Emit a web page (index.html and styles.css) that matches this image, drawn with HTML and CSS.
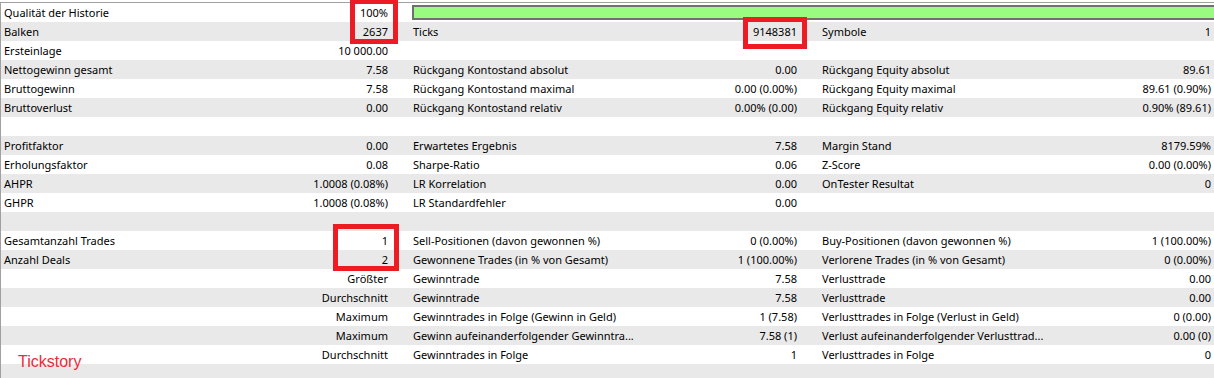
FILE: index.html
```html
<!DOCTYPE html>
<html lang="de">
<head>
<meta charset="utf-8">
<title>Tester Bericht</title>
<link rel="stylesheet" href="styles.css">
</head>
<body>
<div class="report">
  <div class="row">
    <div class="cell g1"><span>Qualität der Historie</span><span>100%</span></div>
    <div class="barcell"><div class="bar"></div></div>
  </div>
  <div class="row">
    <div class="cell g1"><span>Balken</span><span>2637</span></div>
    <div class="cell g2"><span>Ticks</span><span>9148381</span></div>
    <div class="cell g3"><span>Symbole</span><span>1</span></div>
  </div>
  <div class="row">
    <div class="cell g1"><span>Ersteinlage</span><span>10 000.00</span></div>
    <div class="cell g2"></div>
    <div class="cell g3"></div>
  </div>
  <div class="row">
    <div class="cell g1"><span>Nettogewinn gesamt</span><span>7.58</span></div>
    <div class="cell g2"><span>Rückgang Kontostand absolut</span><span>0.00</span></div>
    <div class="cell g3"><span>Rückgang Equity absolut</span><span>89.61</span></div>
  </div>
  <div class="row">
    <div class="cell g1"><span>Bruttogewinn</span><span>7.58</span></div>
    <div class="cell g2"><span>Rückgang Kontostand maximal</span><span>0.00 (0.00%)</span></div>
    <div class="cell g3"><span>Rückgang Equity maximal</span><span>89.61 (0.90%)</span></div>
  </div>
  <div class="row">
    <div class="cell g1"><span>Bruttoverlust</span><span>0.00</span></div>
    <div class="cell g2"><span>Rückgang Kontostand relativ</span><span>0.00% (0.00)</span></div>
    <div class="cell g3"><span>Rückgang Equity relativ</span><span>0.90% (89.61)</span></div>
  </div>
  <div class="row">
    <div class="cell g1"></div><div class="cell g2"></div><div class="cell g3"></div>
  </div>
  <div class="row">
    <div class="cell g1"><span>Profitfaktor</span><span>0.00</span></div>
    <div class="cell g2"><span>Erwartetes Ergebnis</span><span>7.58</span></div>
    <div class="cell g3"><span>Margin Stand</span><span>8179.59%</span></div>
  </div>
  <div class="row">
    <div class="cell g1"><span>Erholungsfaktor</span><span>0.08</span></div>
    <div class="cell g2"><span>Sharpe-Ratio</span><span>0.06</span></div>
    <div class="cell g3"><span>Z-Score</span><span>0.00 (0.00%)</span></div>
  </div>
  <div class="row">
    <div class="cell g1"><span>AHPR</span><span>1.0008 (0.08%)</span></div>
    <div class="cell g2"><span>LR Korrelation</span><span>0.00</span></div>
    <div class="cell g3"><span>OnTester Resultat</span><span>0</span></div>
  </div>
  <div class="row">
    <div class="cell g1"><span>GHPR</span><span>1.0008 (0.08%)</span></div>
    <div class="cell g2"><span>LR Standardfehler</span><span>0.00</span></div>
    <div class="cell g3"></div>
  </div>
  <div class="row">
    <div class="cell g1"></div><div class="cell g2"></div><div class="cell g3"></div>
  </div>
  <div class="row">
    <div class="cell g1"><span>Gesamtanzahl Trades</span><span>1</span></div>
    <div class="cell g2"><span>Sell-Positionen (davon gewonnen %)</span><span>0 (0.00%)</span></div>
    <div class="cell g3"><span>Buy-Positionen (davon gewonnen %)</span><span>1 (100.00%)</span></div>
  </div>
  <div class="row">
    <div class="cell g1"><span>Anzahl Deals</span><span>2</span></div>
    <div class="cell g2"><span>Gewonnene Trades (in % von Gesamt)</span><span>1 (100.00%)</span></div>
    <div class="cell g3"><span>Verlorene Trades (in % von Gesamt)</span><span>0 (0.00%)</span></div>
  </div>
  <div class="row">
    <div class="cell g1"><span></span><span>Größter</span></div>
    <div class="cell g2"><span>Gewinntrade</span><span>7.58</span></div>
    <div class="cell g3"><span>Verlusttrade</span><span>0.00</span></div>
  </div>
  <div class="row">
    <div class="cell g1"><span></span><span>Durchschnitt</span></div>
    <div class="cell g2"><span>Gewinntrade</span><span>7.58</span></div>
    <div class="cell g3"><span>Verlusttrade</span><span>0.00</span></div>
  </div>
  <div class="row">
    <div class="cell g1"><span></span><span>Maximum</span></div>
    <div class="cell g2"><span>Gewinntrades in Folge (Gewinn in Geld)</span><span>1 (7.58)</span></div>
    <div class="cell g3"><span>Verlusttrades in Folge (Verlust in Geld)</span><span>0 (0.00)</span></div>
  </div>
  <div class="row">
    <div class="cell g1"><span></span><span>Maximum</span></div>
    <div class="cell g2"><span>Gewinn aufeinanderfolgender Gewinntra...</span><span>7.58 (1)</span></div>
    <div class="cell g3"><span>Verlust aufeinanderfolgender Verlusttrad...</span><span>0.00 (0)</span></div>
  </div>
  <div class="row">
    <div class="cell g1"><span></span><span>Durchschnitt</span></div>
    <div class="cell g2"><span>Gewinntrades in Folge</span><span>1</span></div>
    <div class="cell g3"><span>Verlusttrades in Folge</span><span>0</span></div>
  </div>
  <div class="row">
    <div class="cell g1"></div><div class="cell g2"></div><div class="cell g3"></div>
  </div>
</div>
<div class="mark mark-1"></div>
<div class="mark mark-2"></div>
<div class="mark mark-3"></div>
<div class="brand">Tickstory</div>
</body>
</html>
```

FILE: styles.css
```css
html, body {
  margin: 0;
  padding: 0;
  background: #ffffff;
  overflow: hidden;
}
body {
  position: relative;
  width: 1214px;
  height: 378px;
  font-family: "Noto Sans", "Open Sans", sans-serif;
  font-size: 11px;
  color: #000000;
}
.report {
  margin-top: 2px;
  border-top: 1px solid #a0a0a0;
  border-left: 1px solid #a0a0a0;
}
.row {
  display: grid;
  grid-template-columns: 391px 409px 413px;
  height: 19px;
}
.row:nth-child(even) {
  background: #e9e9e9;
}
.cell {
  display: flex;
  justify-content: space-between;
  align-items: center;
  white-space: nowrap;
  line-height: 19px;
}
.g1 { padding: 0 4px 0 3px; }
.g2 { padding: 0 4px 0 21px; }
.g3 { padding: 0 3px 0 21px; }
.barcell {
  grid-column: 2 / 4;
  padding: 2px 0 2px 20px;
}
.bar {
  height: 11px;
  background: #99fb80;
  border: 2px solid #707070;
  border-right: none;
}
.mark {
  position: absolute;
  border: 5px solid #ed1c24;
  box-sizing: border-box;
}
.mark-1 { left: 350px; top: -1px; width: 48px; height: 45px; }
.mark-2 { left: 743px; top: 17px; width: 64px; height: 32px; }
.mark-3 { left: 333px; top: 224px; width: 66px; height: 47px; }
.brand {
  position: absolute;
  left: 18px;
  top: 353px;
  font-family: "Liberation Sans", Arial, sans-serif;
  font-size: 16px;
  line-height: 18px;
  color: #ee2a36;
}
```
